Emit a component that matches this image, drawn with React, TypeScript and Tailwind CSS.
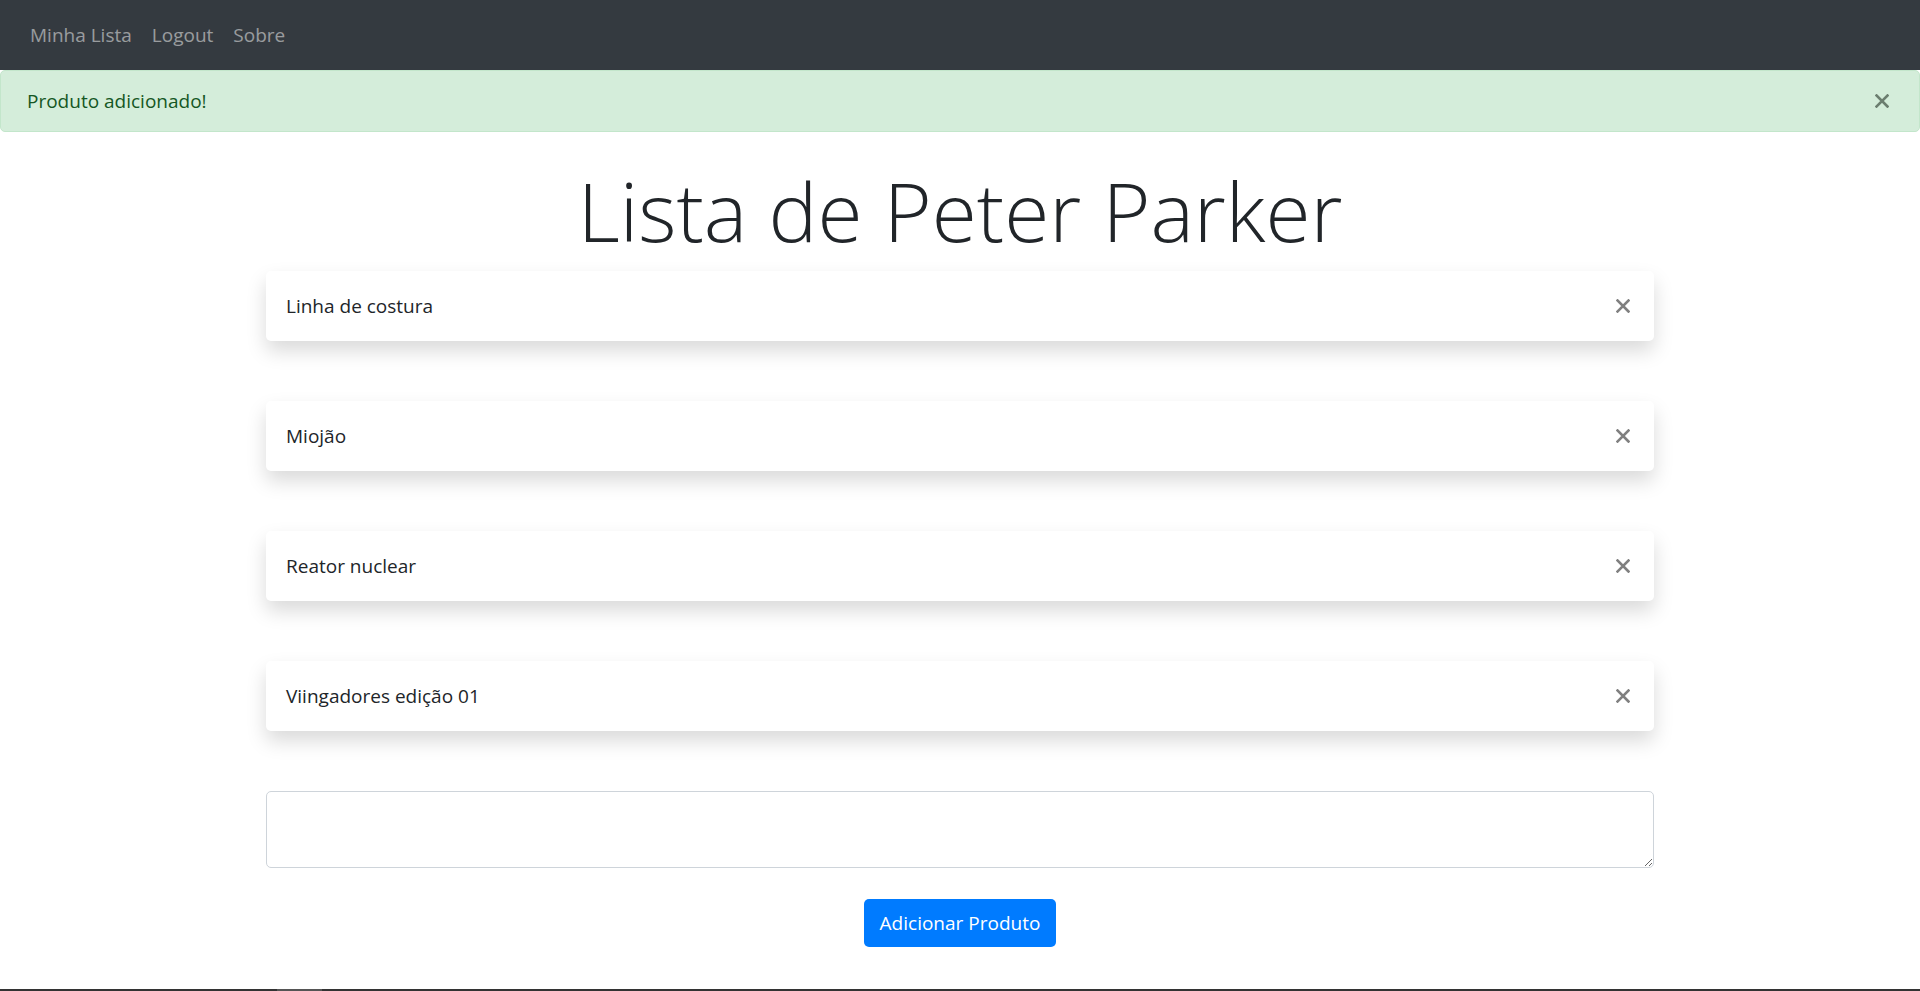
import { useState } from 'react'

const itens = ['Linha de costura', 'Miojão', 'Reator nuclear', 'Viingadores edição 01']

function CloseIcon({ color }: { color: string }) {
  return (
    <svg width="14" height="14" viewBox="0 0 14 14" fill="none">
      <path d="M1.5 1.5 L12.5 12.5 M12.5 1.5 L1.5 12.5" stroke={color} strokeWidth="2.6" strokeLinecap="square" />
    </svg>
  )
}

export default function App() {
  const [texto, setTexto] = useState('')

  return (
    <div className="flex flex-col min-h-screen bg-white font-['Open_Sans',sans-serif] text-[#212529]">
      <nav className="flex items-center h-[70px] px-[20px] bg-[#343a40]">
        <a className="px-[10px] text-[19px] text-white/50">Minha Lista</a>
        <a className="px-[10px] text-[19px] text-white/50">Logout</a>
        <a className="px-[10px] text-[19px] text-white/50">Sobre</a>
      </nav>

      <div className="flex items-center justify-between h-[62px] pl-[26px] pr-[30px] bg-[#d4edda] border border-[#c3e6cb] rounded-[5px] text-[#155724] text-[19px]">
        <span>Produto adicionado!</span>
        <button><CloseIcon color="#6b7e6f" /></button>
      </div>

      <main className="flex flex-col items-center w-[1388px] mx-auto">
        <h1 className="mt-[24px] mb-[7px] text-[82px] font-light leading-[108px] text-[#212529]">Lista de Peter Parker</h1>

        <div className="flex flex-col w-full gap-[60px]">
          {itens.map((item) => (
            <div key={item} className="flex items-center justify-between h-[70px] pl-[20px] pr-[24px] bg-white rounded-[5px] shadow-[0_10px_20px_rgba(0,0,0,0.15)]">
              <span className="text-[19px]">{item}</span>
              <button><CloseIcon color="#808080" /></button>
            </div>
          ))}
        </div>

        <textarea
          value={texto}
          onChange={(e) => setTexto(e.target.value)}
          className="w-full h-[77px] mt-[60px] px-[15px] py-[8px] border border-[#ced4da] rounded-[5px] text-[20px] outline-none"
        />

        <button className="mt-[31px] h-[48px] px-[16px] bg-[#007bff] text-white text-[19px] rounded-[5px]">
          Adicionar Produto
        </button>
      </main>

      <div className="flex mt-auto h-[2px] bg-[#333333]">
        <div className="ml-[277px] w-[45px] bg-[#555555]" />
      </div>
    </div>
  )
}
